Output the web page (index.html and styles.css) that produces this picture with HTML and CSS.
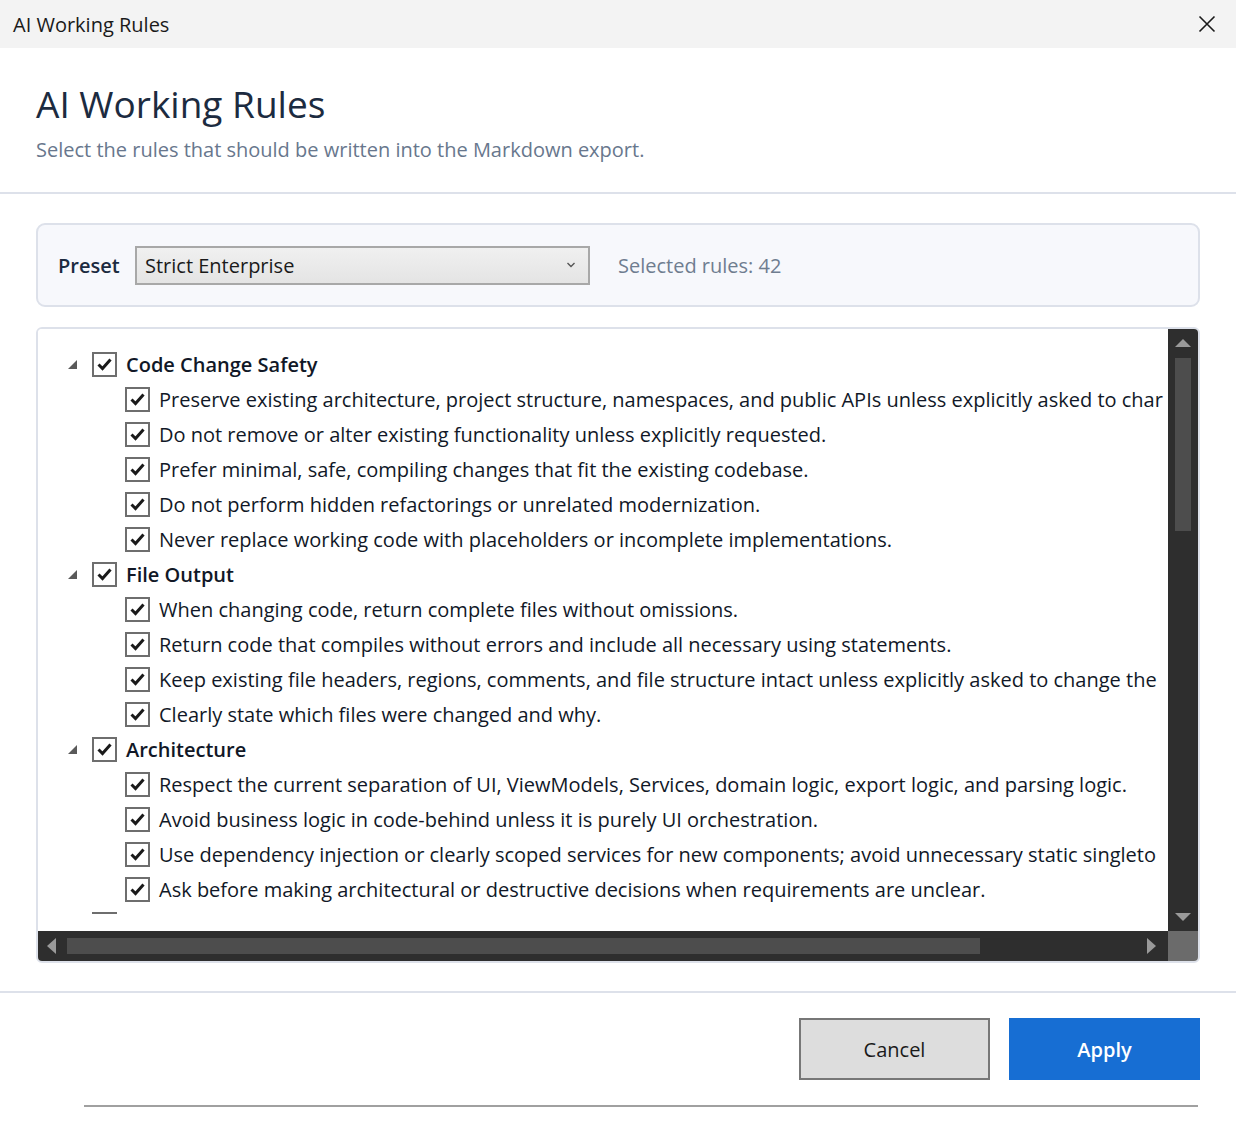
FILE: index.html
```html
<!DOCTYPE html>
<html lang="en">
<head>
    <meta charset="UTF-8">
    <meta name="viewport" content="width=device-width, initial-scale=1.0">
    <title>AI Working Rules</title>
    <link rel="stylesheet" href="styles.css">
</head>
<body>
    <div class="window">
        <div class="titlebar">
            <span class="titlebar-text">AI Working Rules</span>
            <span class="close-btn">
                <svg width="18" height="18" viewBox="0 0 18 18"><path d="M1.5 1.5 L16.5 16.5 M16.5 1.5 L1.5 16.5" stroke="#1a1a1a" stroke-width="1.6" fill="none"/></svg>
            </span>
        </div>

        <header class="header">
            <h1>AI Working Rules</h1>
            <p>Select the rules that should be written into the Markdown export.</p>
        </header>

        <main class="content">
            <div class="preset-card">
                <span class="preset-label">Preset</span>
                <div class="select">
                    <span>Strict Enterprise</span>
                    <svg width="12" height="8" viewBox="0 0 12 8"><path d="M2.5 2 L6 5.5 L9.5 2" stroke="#555" stroke-width="1.4" fill="none"/></svg>
                </div>
                <span class="selected-count">Selected rules: 42</span>
            </div>

            <div class="tree-card">
                <div class="tree-main">
                    <div class="tree-view">
                        <div class="tree-list" id="treeList"></div>
                    </div>
                    <div class="vscroll">
                        <span class="arrow-up"></span>
                        <span class="vthumb"></span>
                        <span class="arrow-down"></span>
                    </div>
                </div>
                <div class="hscroll-row">
                    <div class="hscroll">
                        <span class="arrow-left"></span>
                        <span class="hthumb"></span>
                        <span class="arrow-right"></span>
                    </div>
                    <div class="corner"></div>
                </div>
            </div>
        </main>

        <footer class="footer">
            <button class="btn btn-cancel">Cancel</button>
            <button class="btn btn-apply">Apply</button>
        </footer>
        <div class="bottom-line"></div>
    </div>

    <script>
        // rules shown in the visible part of the tree (long lines are cut by the view)
        const groups = [
            {
                name: 'Code Change Safety',
                rules: [
                    'Preserve existing architecture, project structure, namespaces, and public APIs unless explicitly asked to char',
                    'Do not remove or alter existing functionality unless explicitly requested.',
                    'Prefer minimal, safe, compiling changes that fit the existing codebase.',
                    'Do not perform hidden refactorings or unrelated modernization.',
                    'Never replace working code with placeholders or incomplete implementations.'
                ]
            },
            {
                name: 'File Output',
                rules: [
                    'When changing code, return complete files without omissions.',
                    'Return code that compiles without errors and include all necessary using statements.',
                    'Keep existing file headers, regions, comments, and file structure intact unless explicitly asked to change the',
                    'Clearly state which files were changed and why.'
                ]
            },
            {
                name: 'Architecture',
                rules: [
                    'Respect the current separation of UI, ViewModels, Services, domain logic, export logic, and parsing logic.',
                    'Avoid business logic in code-behind unless it is purely UI orchestration.',
                    'Use dependency injection or clearly scoped services for new components; avoid unnecessary static singleto',
                    'Ask before making architectural or destructive decisions when requirements are unclear.'
                ]
            },
            {
                name: '',
                rules: []
            }
        ];

        const checkSvg = '<svg width="17" height="15" viewBox="0 0 17 15"><path d="M2.5 7.5 L6.5 11.5 L14.5 2.5" stroke="#1a1a1a" stroke-width="3" fill="none"/></svg>';
        const list = document.getElementById('treeList');

        function makeRow(text, isGroup) {
            const row = document.createElement('div');
            row.className = isGroup ? 'row group' : 'row rule';
            row.innerHTML =
                '<span class="expander">' + (isGroup ? '<span class="tri"></span>' : '') + '</span>' +
                '<span class="checkbox">' + checkSvg + '</span>' +
                '<span class="label"></span>';
            row.querySelector('.label').textContent = text;
            return row;
        }

        groups.forEach(group => {
            list.appendChild(makeRow(group.name, true));
            group.rules.forEach(rule => list.appendChild(makeRow(rule, false)));
        });
    </script>
</body>
</html>
```

FILE: styles.css
```css
body {
    margin: 0;
    background-color: #fff;
    font-family: "Open Sans", "Noto Sans", sans-serif;
    overflow: hidden;
}

.window {
    width: 1236px;
    height: 1123px;
    background-color: #fff;
}

.titlebar {
    height: 48px;
    background-color: #f3f3f3;
    display: flex;
    align-items: center;
    justify-content: space-between;
    padding: 0 20px 0 13px;
}

.titlebar-text {
    font-size: 20px;
    color: #1a1a1a;
}

.close-btn {
    display: flex;
}

.header {
    padding: 34px 36px 0;
    height: 110px;
    border-bottom: 2px solid #dde1ea;
}

.header h1 {
    margin: 0;
    font-size: 37px;
    font-weight: 400;
    line-height: 44px;
    color: #1c2b40;
}

.header p {
    margin: 10px 0 0;
    font-size: 20px;
    line-height: 28px;
    color: #68778d;
}

.content {
    padding: 29px 36px 28px;
    display: flex;
    flex-direction: column;
    gap: 20px;
    border-bottom: 2px solid #dde1ea;
}

.preset-card {
    height: 80px;
    border: 2px solid #dde1ea;
    border-radius: 9px;
    background-color: #f7f8fc;
    display: flex;
    align-items: center;
    padding: 0 20px;
}

.preset-label {
    font-size: 20px;
    font-weight: 600;
    color: #1c2b40;
    width: 77px;
}

.select {
    width: 455px;
    height: 39px;
    box-sizing: border-box;
    border: 2px solid #a8a8a8;
    background: linear-gradient(#f0f0f0, #e4e4e4);
    display: flex;
    align-items: center;
    justify-content: space-between;
    padding: 0 11px 0 8px;
    font-size: 20px;
    color: #1a1a1a;
}

.selected-count {
    margin-left: 28px;
    font-size: 20px;
    color: #6f7d90;
}

.tree-card {
    height: 632px;
    border: 2px solid #dde1ea;
    border-radius: 6px;
    display: flex;
    flex-direction: column;
    overflow: hidden;
}

.tree-main {
    flex: 1;
    display: flex;
    min-height: 0;
}

.tree-view {
    flex: 1;
    background-color: #fff;
    padding-bottom: 17px;
    min-width: 0;
}

.tree-list {
    height: 567px;
    padding-top: 18px;
    overflow: hidden;
}

.row {
    height: 35px;
    display: flex;
    align-items: center;
    white-space: nowrap;
    font-size: 20px;
    color: #111827;
}

.row.group {
    padding-left: 24px;
    font-weight: 600;
}

.row.rule {
    padding-left: 57px;
}

.expander {
    width: 30px;
    flex-shrink: 0;
    display: flex;
}

.tri {
    margin-left: 6px;
    width: 0;
    height: 0;
    border-left: 9px solid transparent;
    border-bottom: 9px solid #5a5a5a;
}

.checkbox {
    width: 21px;
    height: 21px;
    border: 2px solid #6e6e6e;
    background-color: #fff;
    display: flex;
    align-items: center;
    justify-content: center;
    flex-shrink: 0;
    margin-right: 9px;
}

.vscroll {
    width: 30px;
    background-color: #2e2e2e;
    position: relative;
}

.arrow-up, .arrow-down {
    position: absolute;
    left: 7px;
    width: 0;
    height: 0;
    border-left: 8px solid transparent;
    border-right: 8px solid transparent;
}

.arrow-up {
    top: 10px;
    border-bottom: 8px solid #9a9a9a;
}

.arrow-down {
    bottom: 10px;
    border-top: 8px solid #9a9a9a;
}

.vthumb {
    position: absolute;
    left: 7px;
    top: 29px;
    width: 16px;
    height: 173px;
    background-color: #4d4d4d;
}

.hscroll-row {
    height: 30px;
    display: flex;
}

.hscroll {
    flex: 1;
    background-color: #2e2e2e;
    position: relative;
}

.corner {
    width: 30px;
    background-color: #6b6b6b;
}

.arrow-left, .arrow-right {
    position: absolute;
    top: 7px;
    width: 0;
    height: 0;
    border-top: 8px solid transparent;
    border-bottom: 8px solid transparent;
}

.arrow-left {
    left: 9px;
    border-right: 9px solid #9a9a9a;
}

.arrow-right {
    right: 12px;
    border-left: 9px solid #9a9a9a;
}

.hthumb {
    position: absolute;
    left: 29px;
    top: 7px;
    width: 913px;
    height: 16px;
    background-color: #4d4d4d;
}

.footer {
    display: flex;
    justify-content: flex-end;
    gap: 19px;
    padding: 25px 36px 0;
    height: 112px;
    box-sizing: border-box;
}

.btn {
    width: 191px;
    height: 62px;
    font-family: inherit;
    font-size: 20px;
}

.btn-cancel {
    background-color: #dddddd;
    border: 2px solid #777;
    color: #1a1a1a;
}

.btn-apply {
    background-color: #176ed3;
    border: none;
    color: #fff;
    font-weight: 600;
}

.bottom-line {
    margin: 0 38px 0 84px;
    height: 2px;
    background-color: #a0a0a0;
}
```
